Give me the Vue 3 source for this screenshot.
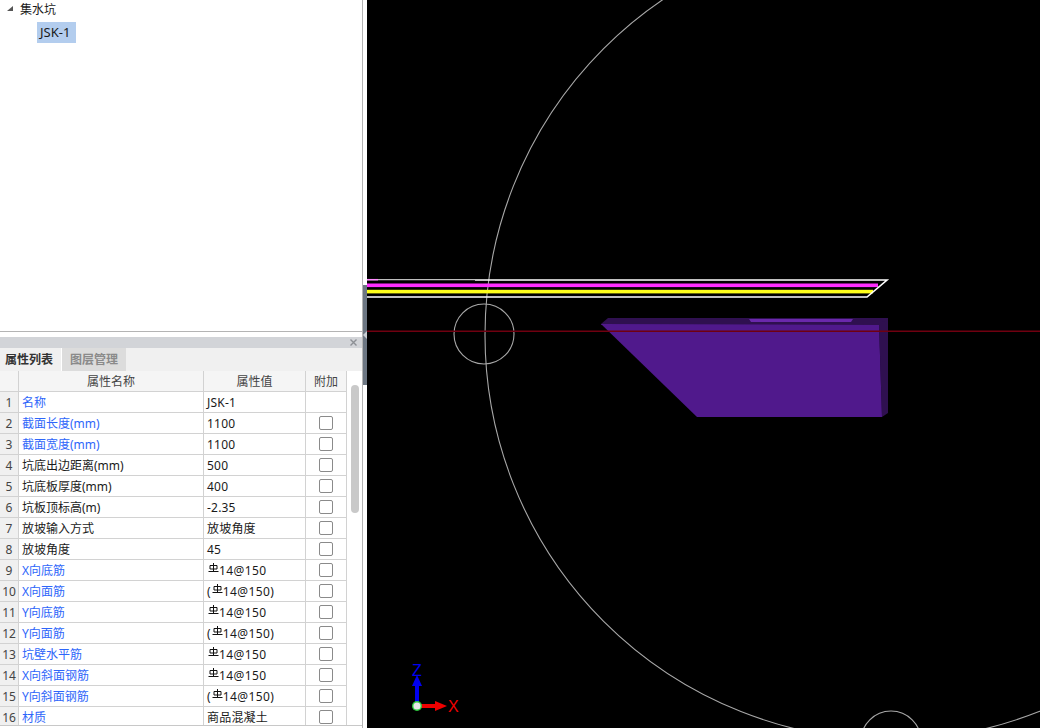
<template>
  <div class="app">
    <div class="left">
      <div class="tree">
        <div class="tree-root">
          <span class="arrow"></span>
          <span>集水坑</span>
        </div>
        <div class="tree-leaf"><span class="leaf-text">JSK-1</span></div>
      </div>
      <div class="panel">
        <div class="panel-head">
          <svg width="7" height="7" viewBox="0 0 7 7"><path d="M0.5 0.5L6.5 6.5M6.5 0.5L0.5 6.5" stroke="#8d9095" stroke-width="1.4" /></svg>
        </div>
        <div class="tabs">
          <div class="tab active">属性列表</div>
          <div class="tab">图层管理</div>
        </div>
        <div class="body">
          <div class="table">
            <div class="row header">
              <div class="cell num"></div>
              <div class="cell center">属性名称</div>
              <div class="cell center">属性值</div>
              <div class="cell center">附加</div>
            </div>
            <div class="row" v-for="(p, i) in props" :key="i">
              <div class="cell num">{{ i + 1 }}</div>
              <div class="cell name" :class="{ blue: p.blue }">{{ p.name }}</div>
              <div class="cell value">
                <template v-if="p.bar">
                  <span v-if="p.paren">(</span>
                  <svg class="rebar" width="11" height="10" viewBox="0 0 11 10">
                    <path d="M5.5 0V8.5M2 2.5H9V6H2ZM0.5 8.5H10.5" fill="none" stroke="#111" stroke-width="1" />
                  </svg>
                  <span class="bar-text">14@150</span>
                  <span v-if="p.paren">)</span>
                </template>
                <template v-else>{{ p.value }}</template>
              </div>
              <div class="cell center">
                <input v-if="i > 0" class="check" type="checkbox" />
              </div>
            </div>
          </div>
          <div class="scroll"><div class="thumb"></div></div>
        </div>
      </div>
    </div>
    <div class="splitter">
      <div class="handle"><span class="notch"></span></div>
    </div>
    <div class="canvas">
      <svg width="673" height="728" viewBox="367 0 673 728">
        <circle cx="890" cy="335" r="405" fill="none" stroke="#a8a8a8" stroke-width="1.1" />
        <circle cx="484" cy="334" r="30" fill="none" stroke="#a8a8a8" stroke-width="1.1" />
        <circle cx="891" cy="741" r="30" fill="none" stroke="#a8a8a8" stroke-width="1.1" />

        <rect x="367" y="283.5" width="511" height="3.6" fill="#ff2eff" />
        <rect x="367" y="289.8" width="506" height="3.6" fill="#ffff1a" />
        <path d="M475 280H887L867 297H367" fill="none" stroke="#fff" stroke-width="1.6" />
        <path d="M367 279.7H475" fill="none" stroke="#bdbdbd" stroke-width="1.3" />
        <path d="M367 279.7H378" fill="none" stroke="#ff8cff" stroke-width="1.5" />

        <path d="M601 324L608 318H888V325H601Z" fill="#2f1050" />
        <path d="M879 325L888 318V413L882 417Z" fill="#2f1050" />
        <path d="M601 324L879 325L882 417H697Z" fill="#50198c" />
        <path d="M749 319H853L851 322H751Z" fill="#6a28ac" />
        <rect x="367" y="330.5" width="673" height="1.5" fill="#700010" />

        <rect x="415" y="684" width="4" height="18" fill="#0000f0" />
        <path d="M412 686L417 675L422 686Z" fill="#0000f0" />
        <rect x="421" y="704" width="15" height="4" fill="#f00000" />
        <path d="M435 701L447 706L435 711Z" fill="#f00000" />
        <circle cx="417" cy="706" r="5" fill="#2ecc40" />
        <circle cx="417" cy="706" r="3.6" fill="#e6e6e6" />
        <text x="412" y="676" class="axis" fill="#0000f0">Z</text>
        <text x="448" y="712" class="axis" fill="#f00000">X</text>
      </svg>
    </div>
  </div>
</template>

<script setup>
const props = [
  { name: '名称', value: 'JSK-1', blue: true },
  { name: '截面长度(mm)', value: '1100', blue: true },
  { name: '截面宽度(mm)', value: '1100', blue: true },
  { name: '坑底出边距离(mm)', value: '500' },
  { name: '坑底板厚度(mm)', value: '400' },
  { name: '坑板顶标高(m)', value: '-2.35' },
  { name: '放坡输入方式', value: '放坡角度' },
  { name: '放坡角度', value: '45' },
  { name: 'X向底筋', bar: true, blue: true },
  { name: 'X向面筋', bar: true, paren: true, blue: true },
  { name: 'Y向底筋', bar: true, blue: true },
  { name: 'Y向面筋', bar: true, paren: true, blue: true },
  { name: '坑壁水平筋', bar: true, blue: true },
  { name: 'X向斜面钢筋', bar: true, blue: true },
  { name: 'Y向斜面钢筋', bar: true, paren: true, blue: true },
  { name: '材质', value: '商品混凝土', blue: true }
]
</script>

<style>
html,
body {
  margin: 0;
  overflow: hidden;
}
</style>

<style scoped>
.app {
  display: flex;
  width: 1040px;
  height: 728px;
  overflow: hidden;
  background: #fff;
  font-family: "Noto Sans", "Noto Sans CJK SC", sans-serif;
  font-size: 12px;
  color: #1a1a1a;
}
.left {
  width: 362px;
  border-right: 1px solid #b4b4b4;
  display: flex;
  flex-direction: column;
}
.tree {
  height: 331px;
  flex: none;
  border-bottom: 1px solid #b4b4b4;
}
.tree-root {
  height: 17px;
  display: flex;
  align-items: center;
  gap: 7px;
  padding-left: 7px;
}
.arrow {
  width: 0;
  height: 0;
  border-left: 6px solid transparent;
  border-bottom: 5px solid #555;
}
.tree-leaf {
  padding: 5px 0 0 37px;
}
.leaf-text {
  display: inline-block;
  height: 21px;
  line-height: 21px;
  padding: 0 3px;
  width: 33px;
  font-size: 13px;
  background: #b3cdee;
}
.panel {
  margin-top: 5px;
  flex: 1;
  min-height: 0;
  display: flex;
  flex-direction: column;
}
.panel-head {
  height: 11px;
  flex: none;
  background: #d2d4d8;
  display: flex;
  align-items: center;
  justify-content: flex-end;
  padding-right: 5px;
}
.tabs {
  height: 23px;
  flex: none;
  display: flex;
  background: #f0f0f0;
}
.tab {
  width: 64px;
  height: 23px;
  line-height: 23px;
  text-align: center;
  background: #dcdcdc;
  color: #8a8a8a;
  font-weight: 700;
  border-left: 1px solid #fff;
}
.tab.active {
  width: 56px;
  padding-left: 5px;
  text-align: left;
  background: #f0f0f0;
  color: #333;
  border-left: 0;
}
.body {
  flex: 1;
  min-height: 0;
  display: flex;
  overflow: hidden;
  border-bottom: 1px solid #c8c8c8;
  margin-bottom: 2px;
}
.table {
  width: 347px;
  flex: none;
}
.row {
  display: grid;
  grid-template-columns: 19px 185px 102px 41px;
  height: 21px;
}
.cell {
  box-sizing: border-box;
  height: 21px;
  line-height: 22px;
  border-right: 1px solid #d2d2d2;
  border-bottom: 1px solid #d2d2d2;
  white-space: nowrap;
  overflow: hidden;
}
.header .cell {
  background: #f5f5f5;
  color: #444;
  padding-top: 1px;
}
.num {
  background: #f0f0f0;
  text-align: center;
  color: #444;
}
.center {
  text-align: center;
  display: flex;
  align-items: center;
  justify-content: center;
}
.name {
  padding-left: 3px;
}
.blue {
  color: #2e66fa;
}
.value {
  padding: 1px 0 0 3px;
  display: flex;
  align-items: center;
  letter-spacing: 0.2px;
}
.bar-text {
  letter-spacing: 0.4px;
}
.rebar {
  margin: -5px 0 0 1px;
  flex: none;
}
.check {
  appearance: none;
  width: 14px;
  height: 14px;
  margin: 0;
  border: 1px solid #8a8a8a;
  border-radius: 2px;
  background: #fff;
}
.scroll {
  flex: 1;
  padding: 14px 3px 0 4px;
}
.thumb {
  width: 8px;
  height: 128px;
  border-radius: 4px;
  background: #c9c9c9;
}
.splitter {
  width: 4px;
  flex: none;
  padding-top: 285px;
  box-sizing: border-box;
}
.handle {
  position: relative;
  height: 100px;
  background: #6c7682;
}
.notch {
  position: absolute;
  top: 46px;
  left: 0;
  border-top: 4px solid transparent;
  border-bottom: 4px solid transparent;
  border-right: 4px solid #c9ced4;
}
.canvas {
  flex: 1;
  background: #000;
  overflow: hidden;
}
.canvas svg {
  display: block;
}
.axis {
  font-family: "Liberation Sans", sans-serif;
  font-size: 16px;
}
</style>
